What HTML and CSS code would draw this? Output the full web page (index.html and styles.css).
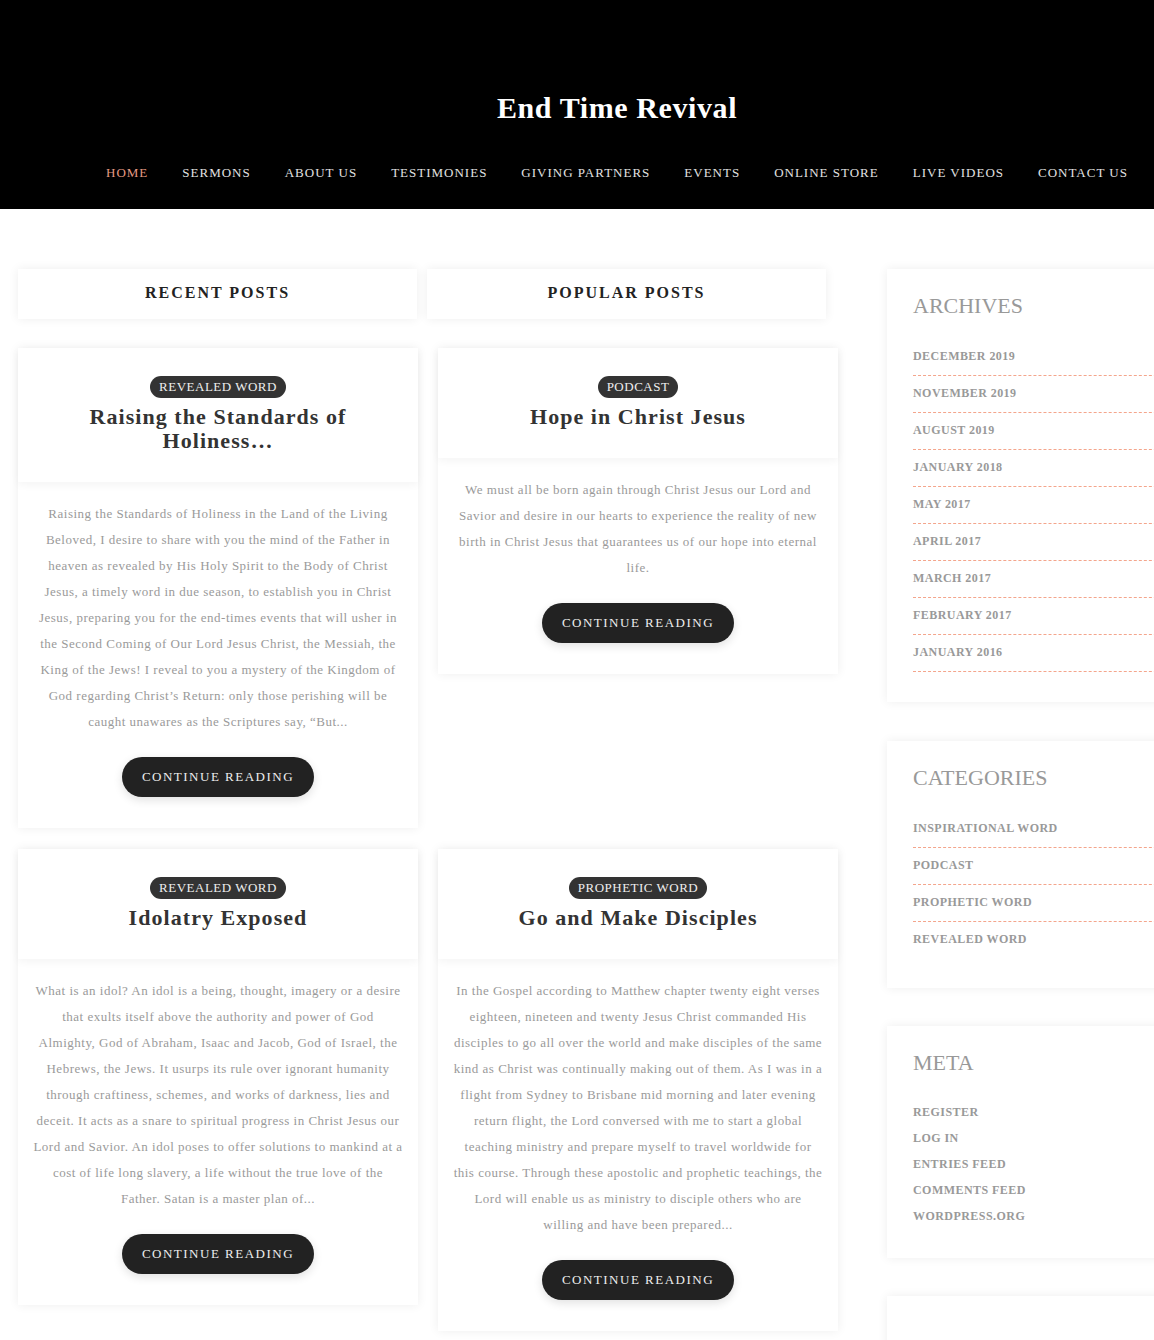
FILE: index.html
```html
<!DOCTYPE html>
<html lang="en">
<head>
<meta charset="utf-8">
<title>End Time Revival</title>
<link rel="stylesheet" href="styles.css">
</head>
<body>
<header class="site-header">
  <h1 class="site-title">End Time Revival</h1>
  <nav class="main-nav">
    <a class="nav-link active" href="#">Home</a>
    <a class="nav-link" href="#">Sermons</a>
    <a class="nav-link" href="#">About Us</a>
    <a class="nav-link" href="#">Testimonies</a>
    <a class="nav-link" href="#">Giving Partners</a>
    <a class="nav-link" href="#">Events</a>
    <a class="nav-link" href="#">Online Store</a>
    <a class="nav-link" href="#">Live Videos</a>
    <a class="nav-link" href="#">Contact Us</a>
  </nav>
</header>

<div class="page">
  <main class="content">
    <div class="tabs">
      <div class="tab">Recent Posts</div>
      <div class="tab">Popular Posts</div>
    </div>

    <div class="posts">
      <article class="card">
        <div class="card-head">
          <span class="badge">Revealed Word</span>
          <h2 class="card-title">Raising the Standards of Holiness…</h2>
        </div>
        <div class="card-body">
          <p class="excerpt">Raising the Standards of Holiness in the Land of the Living Beloved, I desire to share with you the mind of the Father in heaven as revealed by His Holy Spirit to the Body of Christ Jesus, a timely word in due season, to establish you in Christ Jesus, preparing you for the end-times events that will usher in the Second Coming of Our Lord Jesus Christ, the Messiah, the King of the Jews! I reveal to you a mystery of the Kingdom of God regarding Christ’s Return: only those perishing will be caught unawares as the Scriptures say, “But...</p>
          <a class="btn" href="#">Continue Reading</a>
        </div>
      </article>

      <article class="card">
        <div class="card-head">
          <span class="badge">Podcast</span>
          <h2 class="card-title">Hope in Christ Jesus</h2>
        </div>
        <div class="card-body">
          <p class="excerpt">We must all be born again through Christ Jesus our Lord and Savior and desire in our hearts to experience the reality of new birth in Christ Jesus that guarantees us of our hope into eternal life.</p>
          <a class="btn" href="#">Continue Reading</a>
        </div>
      </article>

      <article class="card">
        <div class="card-head">
          <span class="badge">Revealed Word</span>
          <h2 class="card-title">Idolatry Exposed</h2>
        </div>
        <div class="card-body">
          <p class="excerpt">What is an idol? An idol is a being, thought, imagery or a desire that exults itself above the authority and power of God Almighty, God of Abraham, Isaac and Jacob, God of Israel, the Hebrews, the Jews. It usurps its rule over ignorant humanity through craftiness, schemes, and works of darkness, lies and deceit. It acts as a snare to spiritual progress in Christ Jesus our Lord and Savior. An idol poses to offer solutions to mankind at a cost of life long slavery, a life without the true love of the Father. Satan is a master plan of...</p>
          <a class="btn" href="#">Continue Reading</a>
        </div>
      </article>

      <article class="card">
        <div class="card-head">
          <span class="badge">Prophetic Word</span>
          <h2 class="card-title">Go and Make Disciples</h2>
        </div>
        <div class="card-body">
          <p class="excerpt">In the Gospel according to Matthew chapter twenty eight verses eighteen, nineteen and twenty Jesus Christ commanded His disciples to go all over the world and make disciples of the same kind as Christ was continually making out of them. As I was in a flight from Sydney to Brisbane mid morning and later evening return flight, the Lord conversed with me to start a global teaching ministry and prepare myself to travel worldwide for this course. Through these apostolic and prophetic teachings, the Lord will enable us as ministry to disciple others who are willing and have been prepared...</p>
          <a class="btn" href="#">Continue Reading</a>
        </div>
      </article>
    </div>
  </main>

  <aside class="sidebar">
    <section class="widget">
      <h3 class="widget-title">Archives</h3>
      <ul class="widget-list lined">
        <li><a href="#">December 2019</a></li>
        <li><a href="#">November 2019</a></li>
        <li><a href="#">August 2019</a></li>
        <li><a href="#">January 2018</a></li>
        <li><a href="#">May 2017</a></li>
        <li><a href="#">April 2017</a></li>
        <li><a href="#">March 2017</a></li>
        <li><a href="#">February 2017</a></li>
        <li><a href="#">January 2016</a></li>
      </ul>
    </section>

    <section class="widget">
      <h3 class="widget-title">Categories</h3>
      <ul class="widget-list lined last-open">
        <li><a href="#">Inspirational Word</a></li>
        <li><a href="#">Podcast</a></li>
        <li><a href="#">Prophetic Word</a></li>
        <li><a href="#">Revealed Word</a></li>
      </ul>
    </section>

    <section class="widget meta">
      <h3 class="widget-title">Meta</h3>
      <ul class="widget-list plain">
        <li><a href="#">Register</a></li>
        <li><a href="#">Log in</a></li>
        <li><a href="#">Entries feed</a></li>
        <li><a href="#">Comments feed</a></li>
        <li><a href="#">WordPress.org</a></li>
      </ul>
    </section>

    <section class="widget empty"></section>
  </aside>
</div>
</body>
</html>
```

FILE: styles.css
```css
html, body {
  margin: 0;
  padding: 0;
}
body {
  background: #fff;
  font-family: "Liberation Serif", "Times New Roman", serif;
  color: #333;
  overflow-x: hidden;
}
a { text-decoration: none; color: inherit; }

/* Header */
.site-header {
  background: #000;
  height: 209px;
  box-sizing: border-box;
  padding: 90px 0 0 80px;
  text-align: center;
}
.site-title {
  margin: 0;
  font-size: 30px;
  line-height: 36px;
  font-weight: bold;
  color: #fff;
  letter-spacing: 0.6px;
}
.main-nav {
  margin-top: 37px;
  display: flex;
  justify-content: center;
  gap: 34px;
}
.nav-link {
  font-size: 13px;
  line-height: 20px;
  text-transform: uppercase;
  letter-spacing: 1px;
  color: #e2e2e2;
}
.nav-link.active { color: #e59a82; }

/* Layout */
.page {
  display: flex;
  align-items: flex-start;
  padding: 60px 0 0 18px;
  gap: 49px;
}
.content {
  width: 820px;
  flex: none;
}
.sidebar {
  width: 300px;
  flex: none;
  display: flex;
  flex-direction: column;
  gap: 38px;
}

/* Tabs */
.tabs {
  display: flex;
  gap: 10px;
}
.tab {
  width: 399px;
  height: 50px;
  line-height: 48px;
  background: #fff;
  box-shadow: 0 0 10px rgba(0,0,0,0.07);
  text-align: center;
  text-transform: uppercase;
  font-weight: bold;
  font-size: 16px;
  letter-spacing: 2px;
  color: #222;
}

/* Posts */
.posts {
  margin-top: 29px;
  display: grid;
  grid-template-columns: 400px 400px;
  column-gap: 20px;
  row-gap: 21px;
  align-items: start;
}
.card {
  background: #fff;
  box-shadow: 0 0 10px rgba(0,0,0,0.07);
}
.card-head {
  position: relative;
  padding: 28px 20px 29px;
  text-align: center;
  box-shadow: 0 3px 8px rgba(0,0,0,0.045);
}
.badge {
  display: inline-block;
  background: #333;
  color: #eee;
  font-size: 13px;
  line-height: 22px;
  letter-spacing: 0.5px;
  text-transform: uppercase;
  padding: 0 9px;
  border-radius: 11px;
}
.card-title {
  margin: 7px 0 0;
  font-size: 22px;
  line-height: 24px;
  font-weight: bold;
  letter-spacing: 1.05px;
  color: #333;
}
.card-body {
  padding: 19px 15px 31px;
  text-align: center;
}
.excerpt {
  margin: 0;
  font-size: 13px;
  line-height: 26px;
  letter-spacing: 0.5px;
  color: #9a9a9a;
}
.btn {
  display: inline-block;
  margin-top: 22px;
  height: 40px;
  line-height: 40px;
  padding: 0 20px;
  border-radius: 20px;
  background: #222;
  color: #eee;
  font-size: 13px;
  letter-spacing: 1.5px;
  text-transform: uppercase;
  box-shadow: 0 3px 10px rgba(0,0,0,0.12);
}

/* Sidebar widgets */
.widget {
  background: #fff;
  box-shadow: 0 0 10px rgba(0,0,0,0.07);
  padding: 24px 0 30px 26px;
}
.widget:first-child {
  margin-bottom: 1px;
}
.widget.meta {
  padding-bottom: 29px;
}
.widget.empty {
  height: 60px;
  padding: 0;
}
.widget-title {
  margin: 0;
  font-size: 22px;
  line-height: 26px;
  font-weight: normal;
  letter-spacing: 0;
  text-transform: uppercase;
  color: #999;
}
.widget-list {
  list-style: none;
  margin: 20px 0 0;
  padding: 0;
}
.widget-list li {
  font-size: 12px;
  font-weight: bold;
  text-transform: uppercase;
  letter-spacing: 0.45px;
  color: #999;
}
.widget-list.lined li {
  line-height: 17px;
  padding: 9px 0 10px;
  border-bottom: 1px dashed #f4a58c;
}
.widget-list.last-open li:last-child {
  border-bottom: none;
}
.widget-list.plain {
  margin-top: 23px;
}
.widget-list.plain li {
  line-height: 26px;
}
```
